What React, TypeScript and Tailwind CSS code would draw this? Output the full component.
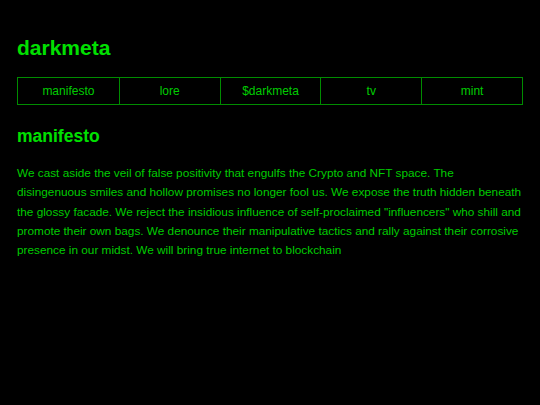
export default function App() {
  const items = ["manifesto", "lore", "$darkmeta", "tv", "mint"];
  return (
    <div className="min-h-[405px] bg-black px-[17px] pt-[36px] text-[#00cc00]" style={{ fontFamily: '"Liberation Sans", Arial, sans-serif' }}>
      <h1 className="text-[21px] font-bold leading-[24px] text-[#00e000]">darkmeta</h1>
      <nav className="mt-[17px] grid grid-cols-5 border border-[#008c00]">
        {items.map((t, i) => (
          <div key={t} className={`flex h-[26px] items-center justify-center text-[12px] text-[#00cc00] ${i > 0 ? "border-l border-[#008c00]" : ""}`}>
            {t}
          </div>
        ))}
      </nav>
      <h2 className="mt-[20px] text-[17.5px] font-bold leading-[22px] text-[#00e000]">manifesto</h2>
      <p className="mt-[17px] text-[11.8px] leading-[19.3px] text-[#00cc00]">
        We cast aside the veil of false positivity that engulfs the Crypto and NFT space. The disingenuous smiles and hollow promises no longer fool us. We expose the truth hidden beneath the glossy facade. We reject the insidious influence of self-proclaimed "influencers" who shill and promote their own bags. We denounce their manipulative tactics and rally against their corrosive presence in our midst. We will bring true internet to blockchain
      </p>
    </div>
  );
}
